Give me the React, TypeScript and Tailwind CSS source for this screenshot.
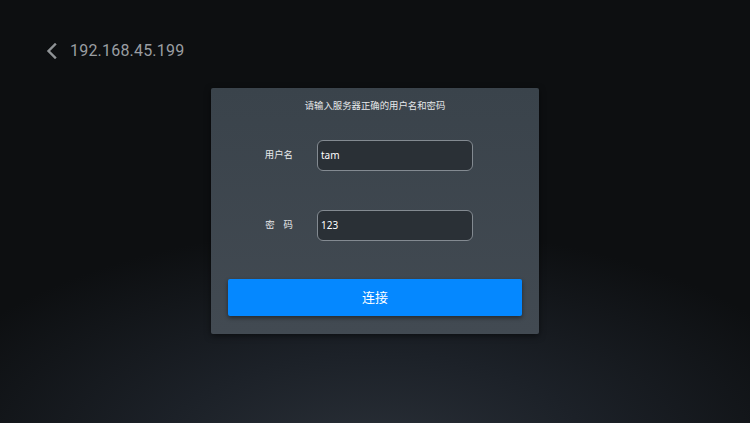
import React from "react";

export default function App() {
  return (
    <div
      className="relative w-[750px] h-[423px] overflow-hidden bg-[#0d0f11]"
      style={{ fontFamily: '"Noto Sans", "Noto Sans CJK SC", sans-serif' }}
    >
      <div className="absolute inset-0 bg-[radial-gradient(ellipse_480px_230px_at_50%_108%,#2a3038_0%,#1c2128_45%,#0d0f11_100%)]" />
      <div className="relative flex flex-col">
        <div className="flex items-center h-[20px] mt-[41px] ml-[46px] gap-[12px]">
          <svg width="12" height="16" viewBox="0 0 12 16" className="text-[#8f9396]">
            <path d="M9 1.5 L2.5 8 L9 14.5" fill="none" stroke="currentColor" strokeWidth="2.4" strokeLinecap="square" />
          </svg>
          <span className="text-[16px] text-[#9a9ea2] tracking-[0.2px]" style={{ fontFamily: 'Roboto, "Noto Sans", sans-serif' }}>
            192.168.45.199
          </span>
        </div>
        <div className="ml-[211px] mt-[27px] w-[328px] h-[246px] bg-gradient-to-b from-[#3a434b] to-[#424a52] rounded-[2px] shadow-[0_2px_6px_rgba(0,0,0,0.5)] flex flex-col">
          <div className="text-center text-[9.4px] text-[#e6e8ea] mt-[11px] leading-[14px]">
            请输入服务器正确的用户名和密码
          </div>
          <div className="flex items-center mt-[27px] h-[31px]">
            <div className="w-[106px] text-right pr-[24px] text-[9.4px] text-[#e8eaec]">
              用户名
            </div>
            <div className="w-[156px] h-[31px] rounded-[6px] border border-[#838a91] bg-[#2a3036] flex items-center pl-[3px] text-[10px] text-white">
              tam
            </div>
          </div>
          <div className="flex items-center mt-[39px] h-[31px]">
            <div className="w-[106px] flex justify-end pr-[24px] gap-[9px] text-[9.4px] text-[#e8eaec]">
              <span>密</span>
              <span>码</span>
            </div>
            <div className="w-[156px] h-[31px] rounded-[6px] border border-[#838a91] bg-[#2a3036] flex items-center pl-[3px] text-[10px] text-white">
              123
            </div>
          </div>
          <div className="mx-[17px] mt-[38px] h-[37px] rounded-[2px] bg-[#0588ff] shadow-[0_2px_4px_rgba(0,0,0,0.45)] flex items-center justify-center text-[13px] text-white">
            连接
          </div>
        </div>
      </div>
    </div>
  );
}
